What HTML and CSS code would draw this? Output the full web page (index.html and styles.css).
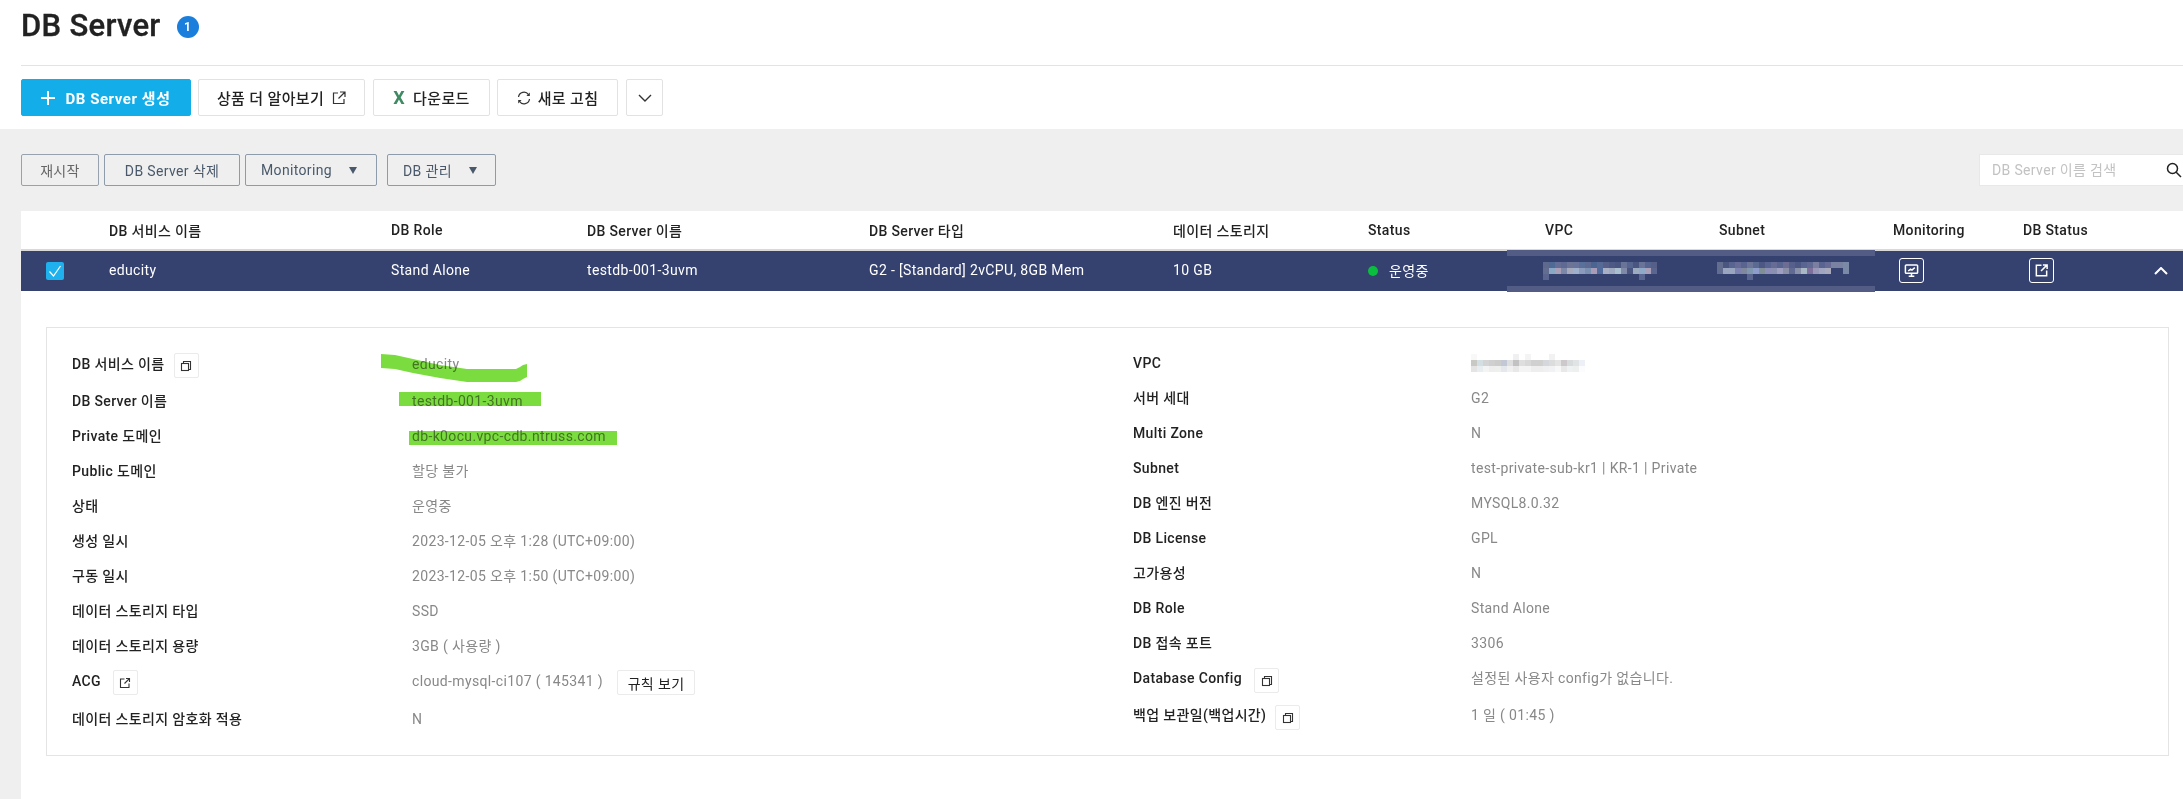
FILE: index.html
```html
<!DOCTYPE html>
<html lang="ko">
<head>
<meta charset="utf-8">
<title>DB Server</title>
<link rel="stylesheet" href="styles.css">
</head>
<body>
<header class="page-head">
  <h1 class="title">DB Server</h1>
  <span class="badge">1</span>
</header>
<div class="toolbar">
  <button class="tbtn tbtn-primary">
    <svg class="ic-plus" viewBox="0 0 14 14"><path d="M7 0v14M0 7h14"/></svg>
    DB Server 생성
  </button>
  <button class="tbtn tbtn-learn">상품 더 알아보기
    <svg class="ic-ext" viewBox="0 0 14 14"><path d="M6 2H1.500v10.500H12V8M8 1h5v5M13 1 6.500 7.500"/></svg>
  </button>
  <button class="tbtn tbtn-down"><span class="xl">X</span>다운로드</button>
  <button class="tbtn tbtn-refresh">
    <svg class="ic-ref" viewBox="0 0 14 14"><path d="M1.500 6A5.500 5.500 0 0 1 11.500 3.600M12.500 8A5.500 5.500 0 0 1 2.500 10.400"/><path class="fillic" d="M12.800 1.500v3.400H9.400zM1.200 12.500V9.100h3.400z"/></svg>
    새로 고침
  </button>
  <button class="tbtn tbtn-more">
    <svg class="ic-chev" viewBox="0 0 14 8"><path d="M1 1l6 6 6-6"/></svg>
  </button>
</div>
<main class="main">
  <div class="actions">
    <button class="abtn abtn-off abtn-restart">재시작</button>
    <button class="abtn abtn-del">DB Server 삭제</button>
    <button class="abtn abtn-left abtn-mon">Monitoring<i class="caret"></i></button>
    <button class="abtn abtn-left abtn-mgr">DB 관리<i class="caret"></i></button>
    <div class="search">
      <input class="search-input" placeholder="DB Server 이름 검색">
      <svg class="ic-search" viewBox="0 0 16 16"><circle cx="6.500" cy="6.500" r="5"/><path d="M10.200 10.200 15 15"/></svg>
    </div>
  </div>
  <section class="panel">
    <div class="grid grid-head">
      <span></span>
      <span>DB 서비스 이름</span>
      <span>DB Role</span>
      <span>DB Server 이름</span>
      <span>DB Server 타입</span>
      <span>데이터 스토리지</span>
      <span>Status</span>
      <span>VPC</span>
      <span>Subnet</span>
      <span>Monitoring</span>
      <span>DB Status</span>
    </div>
    <div class="grid grid-row">
      <span class="check-cell"><span class="check"><svg viewBox="0 0 18 18"><path d="M3.500 9.500l4 4.500 7-10"/></svg></span></span>
      <span class="t">educity</span>
      <span class="t">Stand Alone</span>
      <span class="t">testdb-001-3uvm</span>
      <span class="t">G2 - [Standard] 2vCPU, 8GB Mem</span>
      <span class="t">10 GB</span>
      <span class="status"><i class="dot"></i><span class="t">운영중</span></span>
      <span class="mosaic m-vpc"><i class="r r1"></i><i class="r r2"></i><i class="r r3"></i></span>
      <span class="mosaic m-sub"><i class="r r1"></i><i class="r r2"></i><i class="r r3"></i></span>
      <span><button class="rowic">
        <svg viewBox="0 0 16 16"><rect x="1.500" y="2" width="13" height="9" rx="1"/><path d="M8 11v3M5 14.200h6M4.500 8.500l2.500-2 1.500 1 3-2.500"/></svg>
      </button></span>
      <span class="last-cell"><button class="rowic">
        <svg viewBox="0 0 16 16"><path d="M8 2.500H2.500v11h11V8M9.500 2h4.500v4.500M14 2 7.500 8.500"/></svg>
      </button>
      <svg class="ic-up" viewBox="0 0 14 8"><path d="M1 7l6-6 6 6"/></svg></span>
      <i class="band band-top"></i><i class="band band-bottom"></i>
    </div>
    <div class="detail">
      <div class="detail-col detail-col-l">
        <div class="drow drow-tall"><b class="dl">DB 서비스 이름</b><button class="mini mini-tight"><svg viewBox="0 0 12 12"><path d="M3.500 3.500V1.500h7v8h-2"/><rect x="1.500" y="3.500" width="7" height="7"/></svg></button><span class="dv">educity</span></div>
        <div class="drow"><b class="dl">DB Server 이름</b><span class="dv">testdb-001-3uvm</span></div>
        <div class="drow"><b class="dl">Private 도메인</b><span class="dv">db-k0ocu.vpc-cdb.ntruss.com</span></div>
        <div class="drow"><b class="dl">Public 도메인</b><span class="dv">할당 불가</span></div>
        <div class="drow"><b class="dl">상태</b><span class="dv">운영중</span></div>
        <div class="drow"><b class="dl">생성 일시</b><span class="dv">2023-12-05 오후 1:28 (UTC+09:00)</span></div>
        <div class="drow"><b class="dl">구동 일시</b><span class="dv">2023-12-05 오후 1:50 (UTC+09:00)</span></div>
        <div class="drow"><b class="dl">데이터 스토리지 타입</b><span class="dv">SSD</span></div>
        <div class="drow"><b class="dl">데이터 스토리지 용량</b><span class="dv">3GB ( 사용량 )</span></div>
        <div class="drow drow-acg"><b class="dl">ACG</b><button class="mini"><svg viewBox="0 0 12 12"><path d="M5.500 2H1.500v8.500H10V6.500M7 1.500h3.500V5M10.500 1.500 5.500 6.500"/></svg></button><span class="dv">cloud-mysql-ci107 ( 145341 )<button class="rule">규칙 보기</button></span></div>
        <div class="drow"><b class="dl">데이터 스토리지 암호화 적용</b><span class="dv">N</span></div>
      </div>
      <div class="detail-col detail-col-r">
        <div class="drow"><b class="dl">VPC</b><span class="dv"><span class="mosaic m-light"><i class="r l1"></i><i class="r l2"></i><i class="r l3"></i></span></span></div>
        <div class="drow"><b class="dl">서버 세대</b><span class="dv">G2</span></div>
        <div class="drow"><b class="dl">Multi Zone</b><span class="dv">N</span></div>
        <div class="drow"><b class="dl">Subnet</b><span class="dv">test-private-sub-kr1 | KR-1 | Private</span></div>
        <div class="drow"><b class="dl">DB 엔진 버전</b><span class="dv">MYSQL8.0.32</span></div>
        <div class="drow"><b class="dl">DB License</b><span class="dv">GPL</span></div>
        <div class="drow"><b class="dl">고가용성</b><span class="dv">N</span></div>
        <div class="drow"><b class="dl">DB Role</b><span class="dv">Stand Alone</span></div>
        <div class="drow"><b class="dl">DB 접속 포트</b><span class="dv">3306</span></div>
        <div class="drow drow-tall"><b class="dl">Database Config</b><button class="mini"><svg viewBox="0 0 12 12"><path d="M3.500 3.500V1.500h7v8h-2"/><rect x="1.500" y="3.500" width="7" height="7"/></svg></button><span class="dv">설정된 사용자 config가 없습니다.</span></div>
        <div class="drow"><b class="dl">백업 보관일(백업시간)</b><button class="mini mini-tight"><svg viewBox="0 0 12 12"><path d="M3.500 3.500V1.500h7v8h-2"/><rect x="1.500" y="3.500" width="7" height="7"/></svg></button><span class="dv">1 일 ( 01:45 )</span></div>
      </div>
    </div>
    <svg class="marker" viewBox="0 0 260 105" width="260" height="105">
      <path d="M11 9 25 10 43 14 70 20 97 24H146L150 22 153 20 157 19V32L153 34 150 36 146 37H97L70 33 43 28 25 24 11 23Z"/>
      <path d="M29 47H171V61H29Z"/>
      <path d="M39 86H247V100H39Z"/>
    </svg>
  </section>
</main>
</body>
</html>
```
FILE: styles.css
```css
* { box-sizing: border-box; }
html, body { margin: 0; height: 799px; overflow: hidden; }
body {
  font-family: Roboto, "Noto Sans CJK KR", sans-serif;
  font-size: 14px;
  letter-spacing: .35px;
  color: #222;
  background: #fff;
  display: flex;
  flex-direction: column;
}
button { font-family: inherit; letter-spacing: inherit; cursor: pointer; }

.page-head {
  height: 66px;
  margin-left: 21px;
  border-bottom: 1px solid #e3e3e3;
  display: flex;
  align-items: flex-start;
  padding-top: 9px;
}
.title { margin: 0; font-size: 31px; line-height: 34px; font-weight: 500; letter-spacing: .3px; color: #222; -webkit-text-stroke: .3px #222; }
.badge {
  width: 22px; height: 22px; margin: 7px 0 0 16px;
  border-radius: 50%;
  background: #1a7fdc;
  color: #fff;
  font-size: 12px; font-weight: 700;
  display: flex; align-items: center; justify-content: center;
}

.toolbar {
  height: 63px;
  padding: 13px 0 0 21px;
  display: flex;
  align-items: flex-start;
}
.tbtn {
  height: 37px;
  border: 1px solid #e2e2e2;
  border-radius: 2px;
  background: #fff;
  color: #222;
  font-size: 15px;
  font-weight: 500;
  display: flex; align-items: center; justify-content: center;
  padding: 0;
  margin-right: 7px;
}
.tbtn-primary { width: 170px; background: #13aeea; border-color: #13aeea; color: #fff; font-weight: 700; letter-spacing: .55px; }
.tbtn-learn { width: 167px; margin-right: 8px; }
.tbtn-down { width: 117px; }
.tbtn-refresh { width: 121px; margin-right: 8px; }
.tbtn-more { width: 37px; }
.ic-plus { width: 14px; height: 14px; margin-right: 10px; fill: none; stroke: #fff; stroke-width: 2; }
.ic-ext { width: 14px; height: 14px; margin-left: 8px; fill: none; stroke: #333; stroke-width: 1.2; }
.xl { color: #3f8a63; font-weight: 700; font-size: 18px; margin-right: 8px; }
.ic-ref { width: 14px; height: 14px; margin-right: 7px; fill: none; stroke: #333; stroke-width: 1.2; }
.ic-ref .fillic { fill: #333; stroke: none; }
.ic-chev { width: 14px; height: 8px; fill: none; stroke: #333; stroke-width: 1.4; }

.main {
  flex: 1;
  min-height: 0;
  background: #efefef;
  padding: 25px 0 0 21px;
  display: flex;
  flex-direction: column;
}
.actions { height: 32px; display: flex; align-items: flex-start; margin-bottom: 25px; }
.abtn {
  height: 32px;
  border: 1px solid #8d9bab;
  border-radius: 2px;
  background: #efefef;
  color: #49596b;
  font-size: 14px;
  font-weight: 400;
  padding: 0;
  display: flex; align-items: center; justify-content: center;
}
.abtn-off { color: #666; border-color: #98a2ae; }
.abtn-left { justify-content: flex-start; padding-left: 15px; }
.abtn-restart { width: 78px; margin-right: 5px; }
.abtn-del { width: 136px; margin-right: 5px; }
.abtn-mon { width: 132px; margin-right: 10px; }
.abtn-mgr { width: 109px; }
.caret {
  width: 0; height: 0; margin-left: 17px;
  border-left: 4.500px solid transparent;
  border-right: 4.500px solid transparent;
  border-top: 7px solid #49596b;
}
.search {
  margin-left: auto;
  width: 204px; height: 32px;
  background: #fff;
  border: 1px solid #e8e8e8;
  border-right: 0;
  display: flex; align-items: center;
  padding-left: 12px;
}
.search-input {
  width: 172px; border: 0; outline: 0; padding: 0; background: transparent;
  font: 14px Roboto, "Noto Sans CJK KR", sans-serif;
  letter-spacing: .35px;
}
.search-input::placeholder { color: #c2c2c2; }
.ic-search { flex: none; width: 16px; height: 16px; margin-left: 2px; fill: none; stroke: #222; stroke-width: 1.5; }

.panel { flex: 1; background: #fff; position: relative; }
.grid {
  display: grid;
  grid-template-columns: 88px 282px 196px 282px 304px 195px 177px 174px 174px 130px 160px;
  align-items: center;
}
.grid-head {
  height: 40px;
  border-bottom: 2px solid #d9d9d9;
  font-weight: 500;
  color: #222;
}
.grid-row { height: 40px; padding-bottom: 1px; background: #354270; color: #fff; position: relative; }
.t { padding-bottom: 2px; }
.check-cell { padding-left: 25px; display: flex; }
.check { width: 18px; height: 18px; background: #1fb0ee; border-radius: 2px; display: block; }
.check svg { display: block; width: 18px; height: 18px; fill: none; stroke: #fff; stroke-width: 1.2; }
.status { display: flex; align-items: center; }
.dot { width: 10px; height: 10px; border-radius: 50%; background: #0bbd3f; margin-right: 11px; }
.band { position: absolute; left: 1486px; width: 368px; height: 6px; background: #525c85; }
.band-top { top: -1px; }
.band-bottom { top: 35px; }

.mosaic { display: block; }
.r { display: block; height: 6px; }
.m-vpc { margin-left: -2px; width: 114px; height: 18px; }
.m-sub { margin-left: -2px; width: 132px; height: 18px; }
.m-vpc .r1 { background: linear-gradient(90deg,#5d6a8e 0 6px,#4f6a94 6px 12px,#646e96 12px 18px,#5f6a93 18px 24px,#6c7598 24px 30px,#6a739a 30px 36px,#59709a 36px 42px,#5f6a93 42px 48px,#4a6591 48px 54px,#566a95 54px 60px,#555f88 60px 66px,#4e5a85 66px 72px,#4a5680 72px 78px,#6a7499 78px 84px,#566590 84px 90px,#4a5680 90px 96px,#6a7499 96px 102px,#566590 102px 108px,#565f88 108px 114px); }
.m-vpc .r2 { background: linear-gradient(90deg,#636d90 0 6px,#8aa7c4 6px 12px,#a99fb7 12px 18px,#7d88a8 18px 24px,#a7aabd 24px 30px,#9fb0cc 30px 36px,#8c9abc 36px 42px,#7a90b0 42px 48px,#a99cb8 48px 54px,#4f6c9c 54px 60px,#a9b0c6 60px 66px,#9fa9bf 66px 72px,#a9bfcf 72px 78px,#8089a8 78px 84px,#4a5680 84px 90px,#9dabc0 90px 96px,#8fa9c8 96px 102px,#a99fb9 102px 108px,#5a6590 108px 114px); }
.m-vpc .r3 { background: linear-gradient(90deg,#5a6590 0 6px,transparent 6px 96px,#5a6590 96px 102px,transparent 102px); }
.m-sub .r1 { background: linear-gradient(90deg,#636d90 0 6px,#4a5680 6px 12px,#5a6490 12px 18px,#666c96 18px 24px,#5a6490 24px 30px,#6d7599 30px 36px,#5a6a90 36px 42px,#4d5885 42px 48px,#5a6490 48px 54px,#666c96 54px 60px,#5a6490 60px 66px,#6d6c94 66px 72px,#56608a 72px 78px,#4d5885 78px 84px,#5a6490 84px 90px,#606a92 90px 96px,#7a7ea0 96px 102px,#5a6490 102px 108px,#666c96 108px 114px,#7a82a2 114px 126px,#7a8aa6 126px 132px); }
.m-sub .r2 { background: linear-gradient(90deg,#636d90 0 6px,#9aa6c0 6px 18px,#7d82b0 18px 24px,#80889e 24px 30px,#7f98b0 30px 36px,#8e9ccc 36px 42px,#808e98 42px 48px,#8d8eb8 48px 54px,#8a90b0 54px 60px,#a09fc0 60px 66px,#8a90a8 66px 72px,#606a92 72px 78px,#8a90a8 78px 84px,#a8b8c4 84px 90px,#7f6f9c 90px 96px,#9a98b8 96px 102px,#a0a6c0 102px 108px,#a8aabc 108px 114px,#354270 114px 126px,#7a8aa6 126px 132px); }
.m-sub .r3 { background: linear-gradient(90deg,transparent 0 30px,#5a6590 30px 36px,transparent 36px); }
.m-light { width: 114px; }
.m-light .l1 { background: linear-gradient(90deg,#f8f8f8 0 6px,transparent 6px 42px,#f0f0f0 42px 48px,transparent 48px 54px,#f4f4f4 54px 60px,transparent 60px 78px,#f2f2f2 78px 84px,transparent 84px); }
.m-light .l2 { background: linear-gradient(90deg,#c8c8c4 0 6px,#d4dfe4 6px 12px,#d4d4d4 12px 18px,#cfcfcf 18px 24px,#ccc 24px 30px,#c2c8d6 30px 36px,#dedede 36px 42px,#c2c2c2 42px 48px,#dedede 48px 54px,#d8d8d8 54px 60px,#d0d0d0 60px 72px,#d4d8dc 72px 78px,#dcdcdc 78px 84px,#e4e4e4 84px 90px,#ccc8cc 90px 96px,#d8dcdc 96px 102px,#e0e4e4 102px 108px,#eef0f8 108px 114px); }
.m-light .l3 { background: linear-gradient(90deg,#e4e4e4 0 6px,#e8eef0 6px 12px,#f4f4f4 12px 18px,#eee 18px 24px,#eef0ee 24px 30px,#e4e8ec 30px 36px,#f0f0f0 36px 42px,#e8e8e8 42px 48px,#f4f4f4 48px 60px,#eee 60px 72px,#f0f0f2 72px 78px,#f0f2f4 78px 84px,#f8f8f8 84px 90px,#e8e8e8 90px 96px,#eef2f2 96px 102px,#eef0f0 102px 108px,#fcfcff 108px 114px); }

.rowic {
  width: 25px; height: 25px; margin-left: 6px; padding: 0;
  background: transparent;
  border: 1px solid #fff; border-radius: 3px;
  display: flex; align-items: center; justify-content: center;
}
.rowic svg { width: 15px; height: 15px; fill: none; stroke: #fff; stroke-width: 1.6; }
.last-cell { display: flex; align-items: center; justify-content: space-between; padding-right: 15px; }
.ic-up { width: 14px; height: 8px; fill: none; stroke: #fff; stroke-width: 2; }

.detail {
  margin: 36px 14px 0 25px;
  height: 429px;
  border: 1px solid #e4e4e4;
  padding: 18px 0 0 25px;
  display: grid;
  grid-template-columns: 1061px 1fr;
}
.detail-col-l { margin-top: 1px; }
.drow { height: 35px; padding-top: 8px; line-height: 19px; display: flex; align-items: flex-start; position: relative; }
.drow-tall { height: 37px; }
.drow-acg { height: 38px; }
.dl { font-weight: 500; color: #222; }
.dv { color: #888; position: absolute; left: 340px; top: 8px; display: flex; align-items: flex-start; white-space: nowrap; }
.detail-col-r .dv { left: 338px; }
.mini {
  width: 25px; height: 25px; margin: -1px 0 0 12px; padding: 0;
  background: #fff;
  border: 1px solid #ebebeb; border-radius: 2px;
  display: flex; align-items: center; justify-content: center;
}
.detail-col-l .mini { margin-top: -2px; }
.mini.mini-tight { margin-left: 9px; }
.mini svg { width: 12px; height: 12px; fill: none; stroke: #333; stroke-width: 1.1; }
.rule {
  width: 78px; height: 25px; margin: -2px 0 0 14px; padding: 0;
  background: #fff; color: #222;
  border: 1px solid #ebebeb; border-radius: 2px;
  font-size: 14px;
}
.marker {
  position: absolute;
  left: 349px; top: 134px;
  mix-blend-mode: multiply;
  fill: #7bdc3f;
  pointer-events: none;
}
```
